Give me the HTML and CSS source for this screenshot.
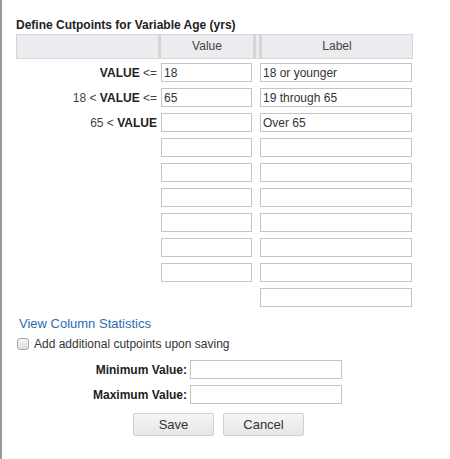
FILE: index.html
```html
<!DOCTYPE html>
<html lang="en">
<head>
  <meta charset="UTF-8">
  <title>Define Cutpoints</title>
  <link rel="stylesheet" href="styles.css">
</head>
<body>
  <div class="dialog">
    <h3 class="title">Define Cutpoints for Variable Age (yrs)</h3>

    <div class="cutpoints">
      <div class="row head">
        <div class="th"></div>
        <div class="th">Value</div>
        <div class="th"></div>
        <div class="th">Label</div>
      </div>
      <div class="row">
        <div class="cond"><b>VALUE</b> &lt;=</div>
        <input class="val" type="text" value="18">
        <span></span>
        <input class="lbl" type="text" value="18 or younger">
      </div>
      <div class="row">
        <div class="cond">18 &lt; <b>VALUE</b> &lt;=</div>
        <input class="val" type="text" value="65">
        <span></span>
        <input class="lbl" type="text" value="19 through 65">
      </div>
      <div class="row">
        <div class="cond">65 &lt; <b>VALUE</b></div>
        <input class="val" type="text" value="">
        <span></span>
        <input class="lbl" type="text" value="Over 65">
      </div>
      <div class="row"><div class="cond"></div><input class="val" type="text"><span></span><input class="lbl" type="text"></div>
      <div class="row"><div class="cond"></div><input class="val" type="text"><span></span><input class="lbl" type="text"></div>
      <div class="row"><div class="cond"></div><input class="val" type="text"><span></span><input class="lbl" type="text"></div>
      <div class="row"><div class="cond"></div><input class="val" type="text"><span></span><input class="lbl" type="text"></div>
      <div class="row"><div class="cond"></div><input class="val" type="text"><span></span><input class="lbl" type="text"></div>
      <div class="row"><div class="cond"></div><input class="val" type="text"><span></span><input class="lbl" type="text"></div>
      <div class="row"><div class="cond"></div><span></span><span></span><input class="lbl" type="text"></div>
    </div>

    <a class="stats-link" href="#">View Column Statistics</a>

    <label class="check">
      <input type="checkbox">
      Add additional cutpoints upon saving
    </label>

    <div class="range">
      <label>Minimum Value:</label>
      <input type="text">
      <label>Maximum Value:</label>
      <input type="text">
    </div>

    <div class="buttons">
      <button>Save</button>
      <button>Cancel</button>
    </div>
  </div>
</body>
</html>
```

FILE: styles.css
```css
body {
  margin: 0;
  font-family: "Liberation Sans", Arial, sans-serif;
  font-size: 12px;
  color: #333;
  background: white;
}
.dialog {
  height: 459px;
  border-left: 2px solid #999;
  padding: 1px 0 0 14px;
  box-sizing: border-box;
}
.title {
  font-size: 12px;
  font-weight: bold;
  color: #222;
  margin: 17px 0 2px 0;
  line-height: 14px;
}
.row {
  display: grid;
  grid-template-columns: 143px 95px 6px 153px;
  height: 25px;
  align-items: center;
}
.row.head {
  height: 25px;
  align-items: stretch;
  margin-bottom: 1px;
}
.th {
  background: #ebecef;
  border: 1px solid #d6d6d6;
  text-align: center;
  line-height: 23px;
  color: #444;
}
.th + .th {
  border-left-width: 2px;
}
.cond {
  text-align: right;
  padding-right: 2px;
  color: #444;
}
.cond b {
  color: #222;
}
input[type="text"] {
  height: 19px;
  box-sizing: border-box;
  border: 1px solid #c4c4c4;
  padding: 0 2px;
  font-family: "Liberation Sans", Arial, sans-serif;
  font-size: 12px;
  color: #333;
  margin: 0;
}
.val {
  width: 91px;
  margin-left: 2px !important;
}
.lbl {
  width: 152px;
}
.stats-link {
  display: block;
  margin: 6px 0 0 3px;
  font-size: 13px;
  color: #2b6cb0;
  text-decoration: none;
  line-height: 16px;
}
.check {
  display: flex;
  align-items: center;
  margin-top: 4px;
  line-height: 16px;
}
.check input {
  appearance: none;
  width: 12px;
  height: 12px;
  margin: 0 5px 0 1px;
  border: 1px solid #a9a9a9;
  border-radius: 3px;
  background: linear-gradient(#f6f6f6, #dcdcdc);
}
.range {
  display: grid;
  grid-template-columns: 174px 152px;
  row-gap: 6px;
  align-items: center;
  margin-top: 8px;
}
.range label {
  text-align: right;
  font-weight: bold;
  padding-right: 3px;
  color: #222;
}
.range input {
  width: 152px;
}
.buttons {
  display: flex;
  gap: 9px;
  margin: 9px 0 0 117px;
}
button {
  width: 81px;
  height: 23px;
  border: 1px solid #d0d0d0;
  border-radius: 2px;
  background: linear-gradient(#f5f5f5, #e6e6e6);
  font-family: "Liberation Sans", Arial, sans-serif;
  font-size: 13px;
  color: #333;
  cursor: pointer;
}
```
